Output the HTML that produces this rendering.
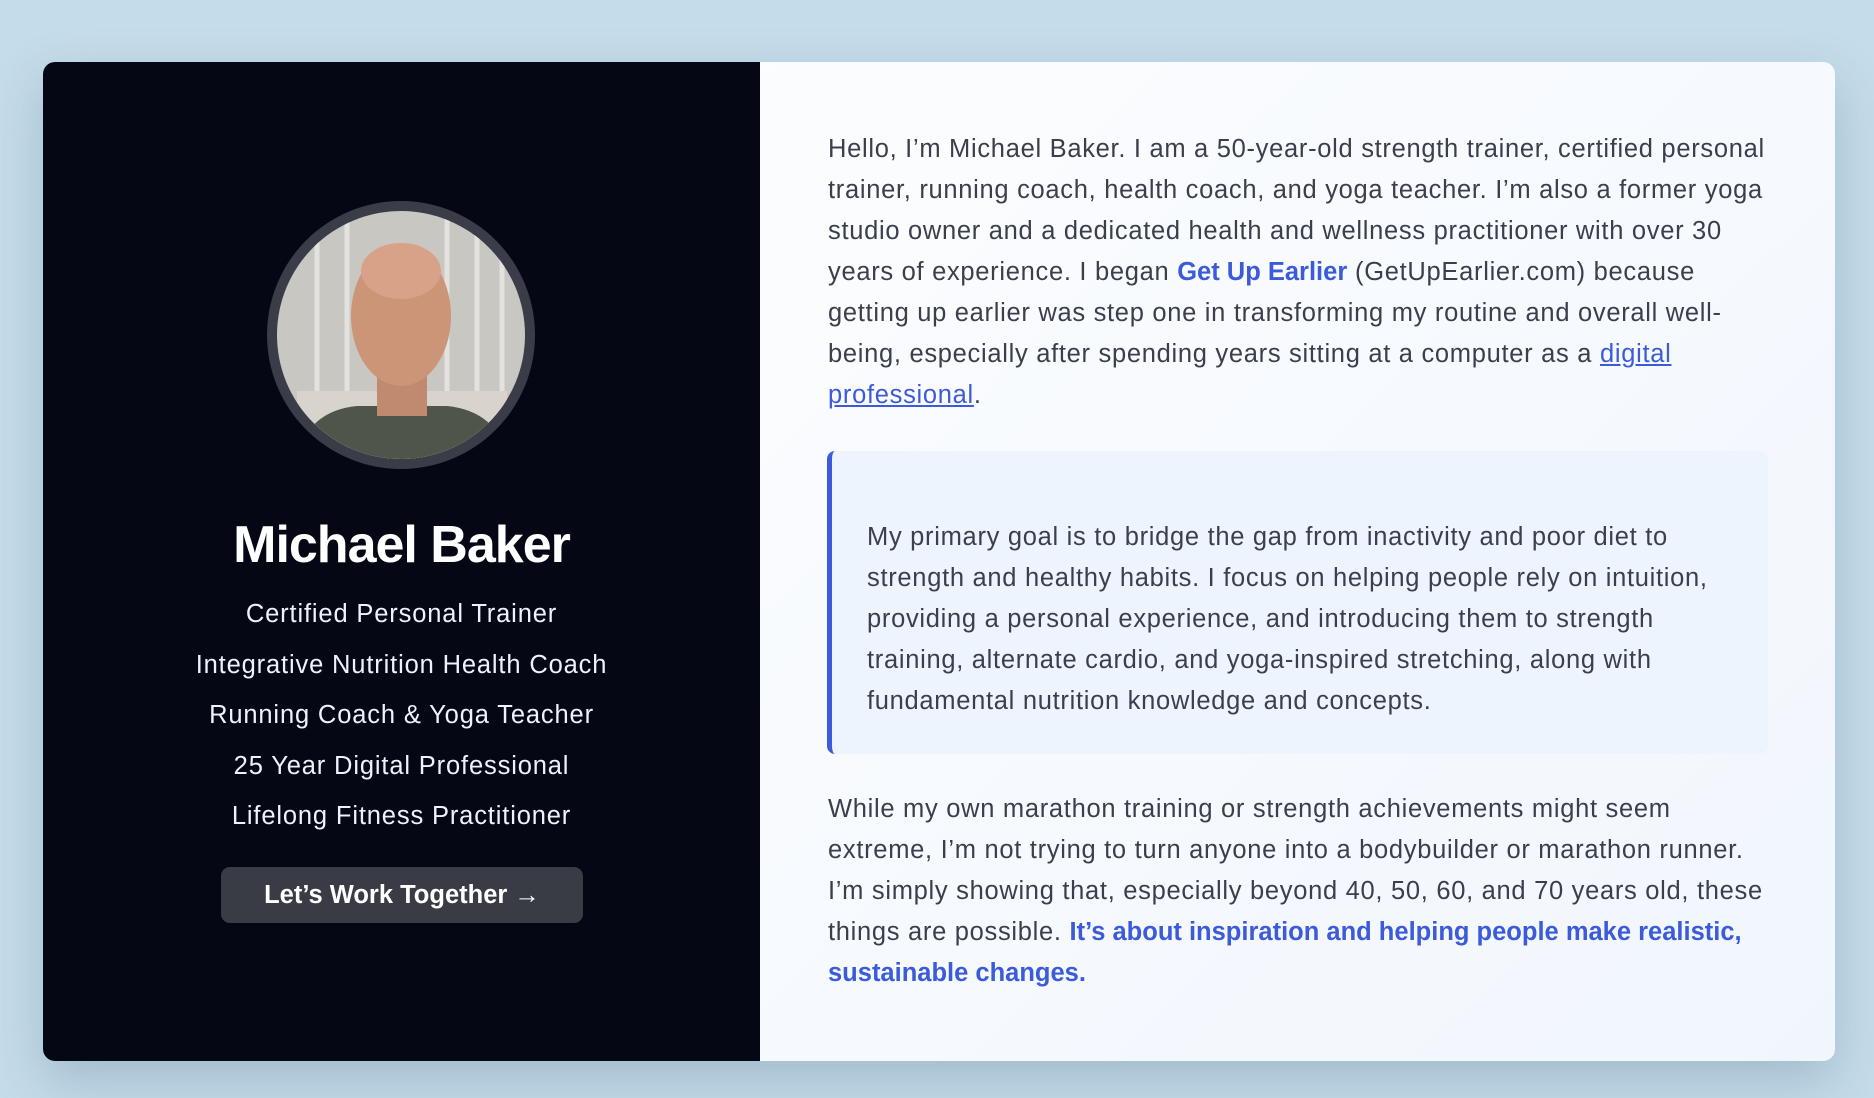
<!DOCTYPE html>
<html><head><meta charset="utf-8"><style>
*{margin:0;padding:0;box-sizing:border-box}
body{width:1874px;height:1098px;background:#c5dcea;font-family:"Liberation Sans",sans-serif;position:relative;overflow:hidden}
.card{position:absolute;left:43px;top:62px;width:1792px;height:999px;border-radius:12px;overflow:hidden;box-shadow:0 20px 50px rgba(60,90,120,.25);background:linear-gradient(135deg,#ffffff 0%,#f1f6fd 100%)}
.dark{position:absolute;left:0;top:0;width:717px;height:999px;background:#050814}
.av{position:absolute;left:224px;top:139px;width:268px;height:268px;border-radius:50%;background:#3a3d48;padding:10px}
.av svg{width:248px;height:248px;border-radius:50%;display:block}
.name{position:absolute;left:0;width:717px;top:453px;text-align:center;color:#fff;font-weight:bold;font-size:52px;letter-spacing:-1px}
.sub{position:absolute;left:0;width:717px;text-align:center;color:#eef2fb;font-size:25.5px;letter-spacing:.85px}
.btn{position:absolute;left:178px;top:805px;width:362px;height:56px;border-radius:9px;background:#393b45;color:#fff;font-weight:bold;font-size:25.5px;text-align:center;line-height:56px;letter-spacing:0}
.t{position:absolute;left:785px;color:#3a3f4b;font-size:25.5px;line-height:41px;white-space:nowrap;letter-spacing:.7px}
.b{color:#3b5bdb;font-weight:bold;letter-spacing:0}
.u{color:#3b5bdb;text-decoration:underline}
.q{position:absolute;left:784px;top:389px;width:941px;height:303px;background:#eef4fe;border-left:5px solid #3b5bdb;border-radius:8px}
</style></head><body>
<div class="card">
<div class="dark">
<div class="av"><svg viewBox="0 0 248 248">
<rect width="248" height="248" fill="#c9c7c2"/>
<g stroke="#e4e2de" stroke-width="5">
<line x1="40" y1="0" x2="40" y2="248"/><line x1="70" y1="0" x2="70" y2="248"/><line x1="170" y1="0" x2="170" y2="248"/><line x1="200" y1="0" x2="200" y2="248"/><line x1="225" y1="0" x2="225" y2="248"/></g>
<rect x="20" y="180" width="210" height="68" fill="#d8d3cc"/>
<path d="M20 248 Q30 200 80 195 L170 195 Q220 200 232 248Z" fill="#4f5548"/>
<rect x="100" y="150" width="50" height="55" fill="#c08a70"/>
<ellipse cx="124" cy="105" rx="50" ry="70" fill="#cc9578"/>
<ellipse cx="124" cy="60" rx="40" ry="28" fill="#d7a287"/>
</svg></div>
<div class="name">Michael Baker</div>
<div class="sub" style="top:538px">Certified Personal Trainer</div>
<div class="sub" style="top:589px">Integrative Nutrition Health Coach</div>
<div class="sub" style="top:639px">Running Coach &amp; Yoga Teacher</div>
<div class="sub" style="top:690px">25 Year Digital Professional</div>
<div class="sub" style="top:740px">Lifelong Fitness Practitioner</div>
<div class="btn">Let’s Work Together →</div>
</div>
<div class="t" style="top:67px">Hello, I’m Michael Baker. I am a 50-year-old strength trainer, certified personal<br>trainer, running coach, health coach, and yoga teacher. I’m also a former yoga<br>studio owner and a dedicated health and wellness practitioner with over 30<br>years of experience. I began <span class="b">Get Up Earlier</span> (GetUpEarlier.com) because<br>getting up earlier was step one in transforming my routine and overall well-<br>being, especially after spending years sitting at a computer as a <span class="u">digital</span><br><span class="u">professional</span>.</div>
<div class="q"></div>
<div class="t" style="left:824px;top:455px">My primary goal is to bridge the gap from inactivity and poor diet to<br>strength and healthy habits. I focus on helping people rely on intuition,<br>providing a personal experience, and introducing them to strength<br>training, alternate cardio, and yoga-inspired stretching, along with<br>fundamental nutrition knowledge and concepts.</div>
<div class="t" style="top:727px">While my own marathon training or strength achievements might seem<br>extreme, I’m not trying to turn anyone into a bodybuilder or marathon runner.<br>I’m simply showing that, especially beyond 40, 50, 60, and 70 years old, these<br>things are possible. <span class="b">It’s about inspiration and helping people make realistic,</span><br><span class="b">sustainable changes.</span></div>
</div>
</body></html>
